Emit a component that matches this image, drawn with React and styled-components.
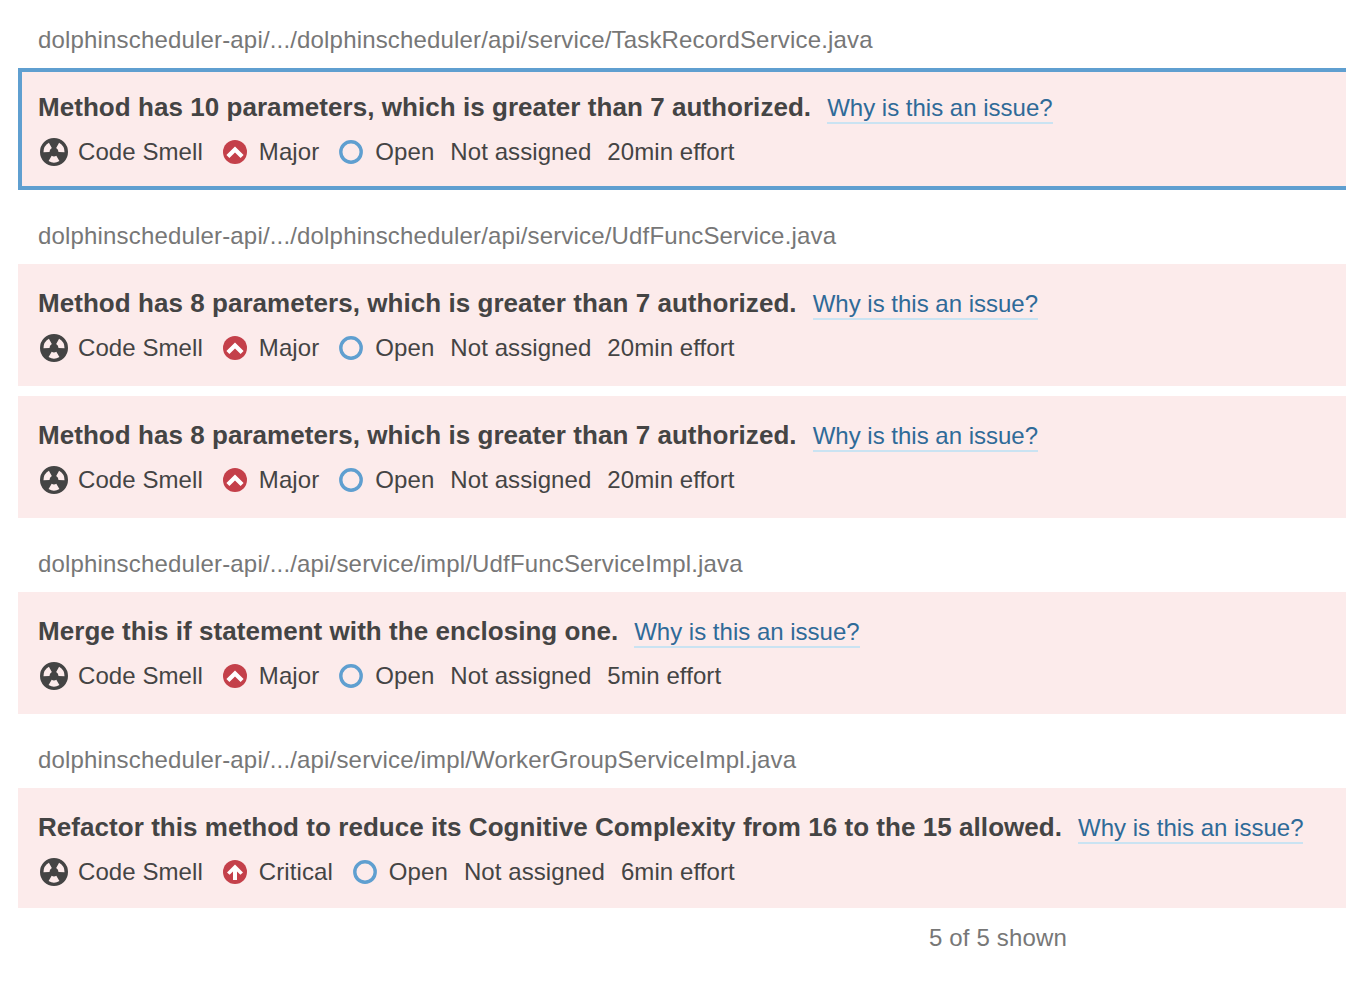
import styled, { createGlobalStyle } from 'styled-components';

const GlobalStyle = createGlobalStyle`
	html, body {
		margin: 0;
		padding: 0;
		background: #fff;
		overflow-x: hidden;
	}
	body {
		font-family: 'Liberation Sans', Arial, sans-serif;
		font-size: 24px;
		color: #444;
	}
`;

const groups = [
	{
		path: 'dolphinscheduler-api/.../dolphinscheduler/api/service/TaskRecordService.java',
		issues: [
			{ title: 'Method has 10 parameters, which is greater than 7 authorized.', severity: 'Major', effort: '20min effort', selected: true },
		],
	},
	{
		path: 'dolphinscheduler-api/.../dolphinscheduler/api/service/UdfFuncService.java',
		issues: [
			{ title: 'Method has 8 parameters, which is greater than 7 authorized.', severity: 'Major', effort: '20min effort' },
			{ title: 'Method has 8 parameters, which is greater than 7 authorized.', severity: 'Major', effort: '20min effort' },
		],
	},
	{
		path: 'dolphinscheduler-api/.../api/service/impl/UdfFuncServiceImpl.java',
		issues: [
			{ title: 'Merge this if statement with the enclosing one.', severity: 'Major', effort: '5min effort' },
		],
	},
	{
		path: 'dolphinscheduler-api/.../api/service/impl/WorkerGroupServiceImpl.java',
		issues: [
			{ title: 'Refactor this method to reduce its Cognitive Complexity from 16 to the 15 allowed.', severity: 'Critical', effort: '6min effort', short: true },
		],
	},
];

const wedge = (center) => {
	const toPoint = (r, deg) => {
		const a = (deg * Math.PI) / 180;
		return `${(14 + r * Math.cos(a)).toFixed(2)} ${(14 + r * Math.sin(a)).toFixed(2)}`;
	};
	const inner = 4.5;
	const outer = 10.5;
	const half = 31;
	return `M${toPoint(inner, center - half)} L${toPoint(outer, center - half)} A${outer} ${outer} 0 0 1 ${toPoint(outer, center + half)} L${toPoint(inner, center + half)} A${inner} ${inner} 0 0 0 ${toPoint(inner, center - half)} Z`;
};

const SmellIcon = () => (
	<svg width='28' height='28' viewBox='0 0 28 28'>
		<path
			fill='#444'
			fillRule='evenodd'
			d={`M14 0a14 14 0 1 0 0 28a14 14 0 1 0 0-28Z ${wedge(210)} ${wedge(330)} ${wedge(90)}`}
		/>
	</svg>
);

const MajorIcon = () => (
	<svg width='24' height='24' viewBox='0 0 24 24'>
		<circle cx='12' cy='12' r='12' fill='#c4404a' />
		<path d='M3.4 15 12 6.6l8.6 8.4-3 3L12 12.6 6.4 18Z' fill='#fff' />
	</svg>
);

const CriticalIcon = () => (
	<svg width='24' height='24' viewBox='0 0 24 24'>
		<circle cx='12' cy='12' r='12' fill='#c4404a' />
		<path d='M12 4.4 20 12.4l-2.6 2.4-3.4-3.2V20h-4V11.6l-3.4 3.2L4 12.4Z' fill='#fff' />
	</svg>
);

const OpenIcon = () => (
	<svg width='24' height='24' viewBox='0 0 24 24'>
		<circle cx='12' cy='12' r='10.2' fill='none' stroke='#5f9fd0' strokeWidth='3.4' />
	</svg>
);

const Issue = ({ issue }) => (
	<IssueCard $selected={issue.selected} $short={issue.short}>
		<TitleRow>
			<IssueTitle>{issue.title}</IssueTitle>
			<WhyLink>Why is this an issue?</WhyLink>
		</TitleRow>
		<MetaRow>
			<MetaItem>
				<IconBox><SmellIcon /></IconBox>
				Code Smell
			</MetaItem>
			<MetaItem>
				<IconBox>{issue.severity === 'Critical' ? <CriticalIcon /> : <MajorIcon />}</IconBox>
				{issue.severity}
			</MetaItem>
			<MetaItem>
				<IconBox><OpenIcon /></IconBox>
				Open
			</MetaItem>
			<MetaItem>Not assigned</MetaItem>
			<MetaItem>{issue.effort}</MetaItem>
		</MetaRow>
	</IssueCard>
);

export default function App() {
	return (
		<Page>
			<GlobalStyle />
			{groups.map((group) => (
				<Group key={group.path}>
					<FilePath>{group.path}</FilePath>
					<IssueList>
						{group.issues.map((issue, index) => (
							<Issue key={index} issue={issue} />
						))}
					</IssueList>
				</Group>
			))}
			<Footer>5 of 5 shown</Footer>
		</Page>
	);
}

const Page = styled.div`
	width: 1346px;
	padding-left: 18px;
	box-sizing: border-box;
	min-height: 994px;
`;

const Group = styled.section`
	margin-top: 6px;

	&:first-of-type {
		margin-top: 0;
	}
`;

const FilePath = styled.div`
	padding: 24px 0 12px 20px;
	line-height: 32px;
	letter-spacing: 0.17px;
	color: #777;
`;

const IssueList = styled.div`
	display: flex;
	flex-direction: column;
	gap: 10px;
`;

const IssueCard = styled.div`
	box-sizing: border-box;
	height: ${(props) => (props.$short ? '120px' : '122px')};
	padding: ${(props) => (props.$selected ? '20px 0 0 16px' : '24px 0 0 20px')};
	background: #fcebeb;
	border: ${(props) => (props.$selected ? '4px solid #5f9fd0' : 'none')};
	border-right: none;
`;

const TitleRow = styled.div`
	display: flex;
	align-items: center;
	gap: 16px;
	height: 32px;
`;

const IssueTitle = styled.div`
	font-size: 26px;
	font-weight: 700;
	line-height: 30px;
	padding-bottom: 2px;
	letter-spacing: 0.05px;
	color: #444;
`;

const WhyLink = styled.a`
	color: #2f6a98;
	line-height: 28px;
	padding-top: 2px;
	border-bottom: 2px solid #cae3f2;
`;

const MetaRow = styled.div`
	display: flex;
	align-items: center;
	gap: 16px;
	height: 32px;
	margin-top: 12px;
`;

const MetaItem = styled.div`
	display: flex;
	align-items: center;
	gap: 8px;
	line-height: 32px;
	letter-spacing: 0.08px;
	color: #444;
`;

const IconBox = styled.span`
	display: flex;
	align-items: center;
	justify-content: center;
	width: 32px;
	height: 32px;
`;

const Footer = styled.div`
	padding: 14px 0 0 911px;
	line-height: 32px;
	letter-spacing: 0.15px;
	color: #777;
`;
